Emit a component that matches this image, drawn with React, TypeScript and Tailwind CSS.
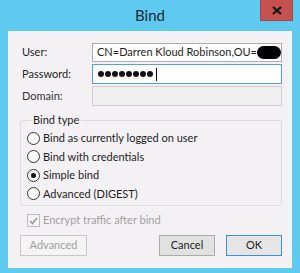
import React from "react";

const Radio = ({ label, checked }: { label: string; checked?: boolean }) => (
  <div className="flex items-center h-[18.5px]">
    <span className="w-[13px] h-[13px] rounded-full border border-[#333333] bg-white flex items-center justify-center">
      {checked && <span className="w-[5px] h-[5px] rounded-full bg-[#111111]" />}
    </span>
    <span className="ml-[3px]">{label}</span>
  </div>
);

const App: React.FC = () => {
  return (
    <div
      className="w-[300px] h-[273px] bg-[#5fcaf0] flex flex-col text-[11px] text-[#1e1e1e]"
      style={{ fontFamily: 'Lato, "Noto Sans", sans-serif' }}
    >
      {/* Title bar */}
      <div className="relative h-[31px] flex items-center justify-center">
        <span className="text-[15px] text-[#1b2b3a] -mt-[1px]">Bind</span>
        <div className="absolute top-0 right-[7px] w-[33px] h-[21px] bg-[#c75050] border border-[#a84444] border-t-0 flex items-center justify-center">
          <svg width="10" height="9" viewBox="0 0 10 9">
            <path d="M1 1l8 7M9 1l-8 7" stroke="#111" strokeWidth="2.2" />
          </svg>
        </div>
      </div>

      {/* Body */}
      <div className="flex-1 mx-[8px] mb-[5px] bg-[#f4f1f5] pl-[12px] pr-[10px] pt-[11px] flex flex-col">
        {/* Fields */}
        <div className="flex flex-col gap-[2px] pl-[2px]">
          <div className="flex items-center h-[20px]">
            <span className="w-[70px]">User:</span>
            <div className="flex-1 h-[19px] border border-[#abadb3] bg-white flex items-center pl-[4px] overflow-hidden whitespace-nowrap">
              <span>CN=Darren Kloud Robinson,OU=</span>
              <span className="w-[24px] h-[13px] rounded-full bg-black shrink-0" />
            </div>
          </div>
          <div className="flex items-center h-[20px]">
            <span className="w-[70px]">Password:</span>
            <div className="flex-1 h-[20px] border border-[#569de5] bg-white flex items-center gap-[1px] pl-[5px]">
              {[0, 1, 2, 3, 4, 5, 6, 7].map((i) => (
                <span key={i} className="w-[6px] h-[6px] rounded-full bg-[#111]" />
              ))}
              <span className="ml-[2px] w-[1px] h-[13px] bg-black" />
            </div>
          </div>
          <div className="flex items-center h-[20px]">
            <span className="w-[70px] text-[#333]">Domain:</span>
            <div className="flex-1 h-[20px] border border-[#cfcfcf] bg-[#f0f0f0]" />
          </div>
        </div>

        {/* Bind type group */}
        <fieldset className="mt-[6px] border border-[#dcdcdc] rounded-[3px] pl-[6px] pb-[2px]">
          <legend className="ml-[4px] px-[2px] leading-[16px]">Bind type</legend>
          <div className="flex flex-col mt-[1px]">
            <Radio label="Bind as currently logged on user" />
            <Radio label="Bind with credentials" />
            <Radio label="Simple bind" checked />
            <Radio label="Advanced (DIGEST)" />
          </div>
        </fieldset>

        {/* Encrypt checkbox */}
        <div className="flex items-center mt-[8px] pl-[7px] h-[13px]">
          <span className="w-[13px] h-[13px] border border-[#bcbcbc] bg-[#f4f4f4] flex items-center justify-center">
            <svg width="9" height="8" viewBox="0 0 9 8">
              <path d="M1 4l2.5 2.5L8 1" stroke="#9a9a9a" strokeWidth="1.6" fill="none" />
            </svg>
          </span>
          <span className="ml-[3px] text-[#a0a0a0]">Encrypt traffic after bind</span>
        </div>

        {/* Buttons */}
        <div className="flex items-center mt-[8px]">
          <button className="w-[67px] h-[21px] border border-[#c8c8c8] bg-[#f4f4f4] text-[#a0a0a0]">
            Advanced
          </button>
          <div className="flex-1" />
          <button className="w-[56px] h-[21px] border border-[#acacac] bg-[#e1e1e1]">
            Cancel
          </button>
          <button className="ml-[11px] w-[56px] h-[21px] border border-[#3c8fd8] bg-[#e5e5e5]">
            OK
          </button>
        </div>
      </div>
    </div>
  );
};

export default App;
